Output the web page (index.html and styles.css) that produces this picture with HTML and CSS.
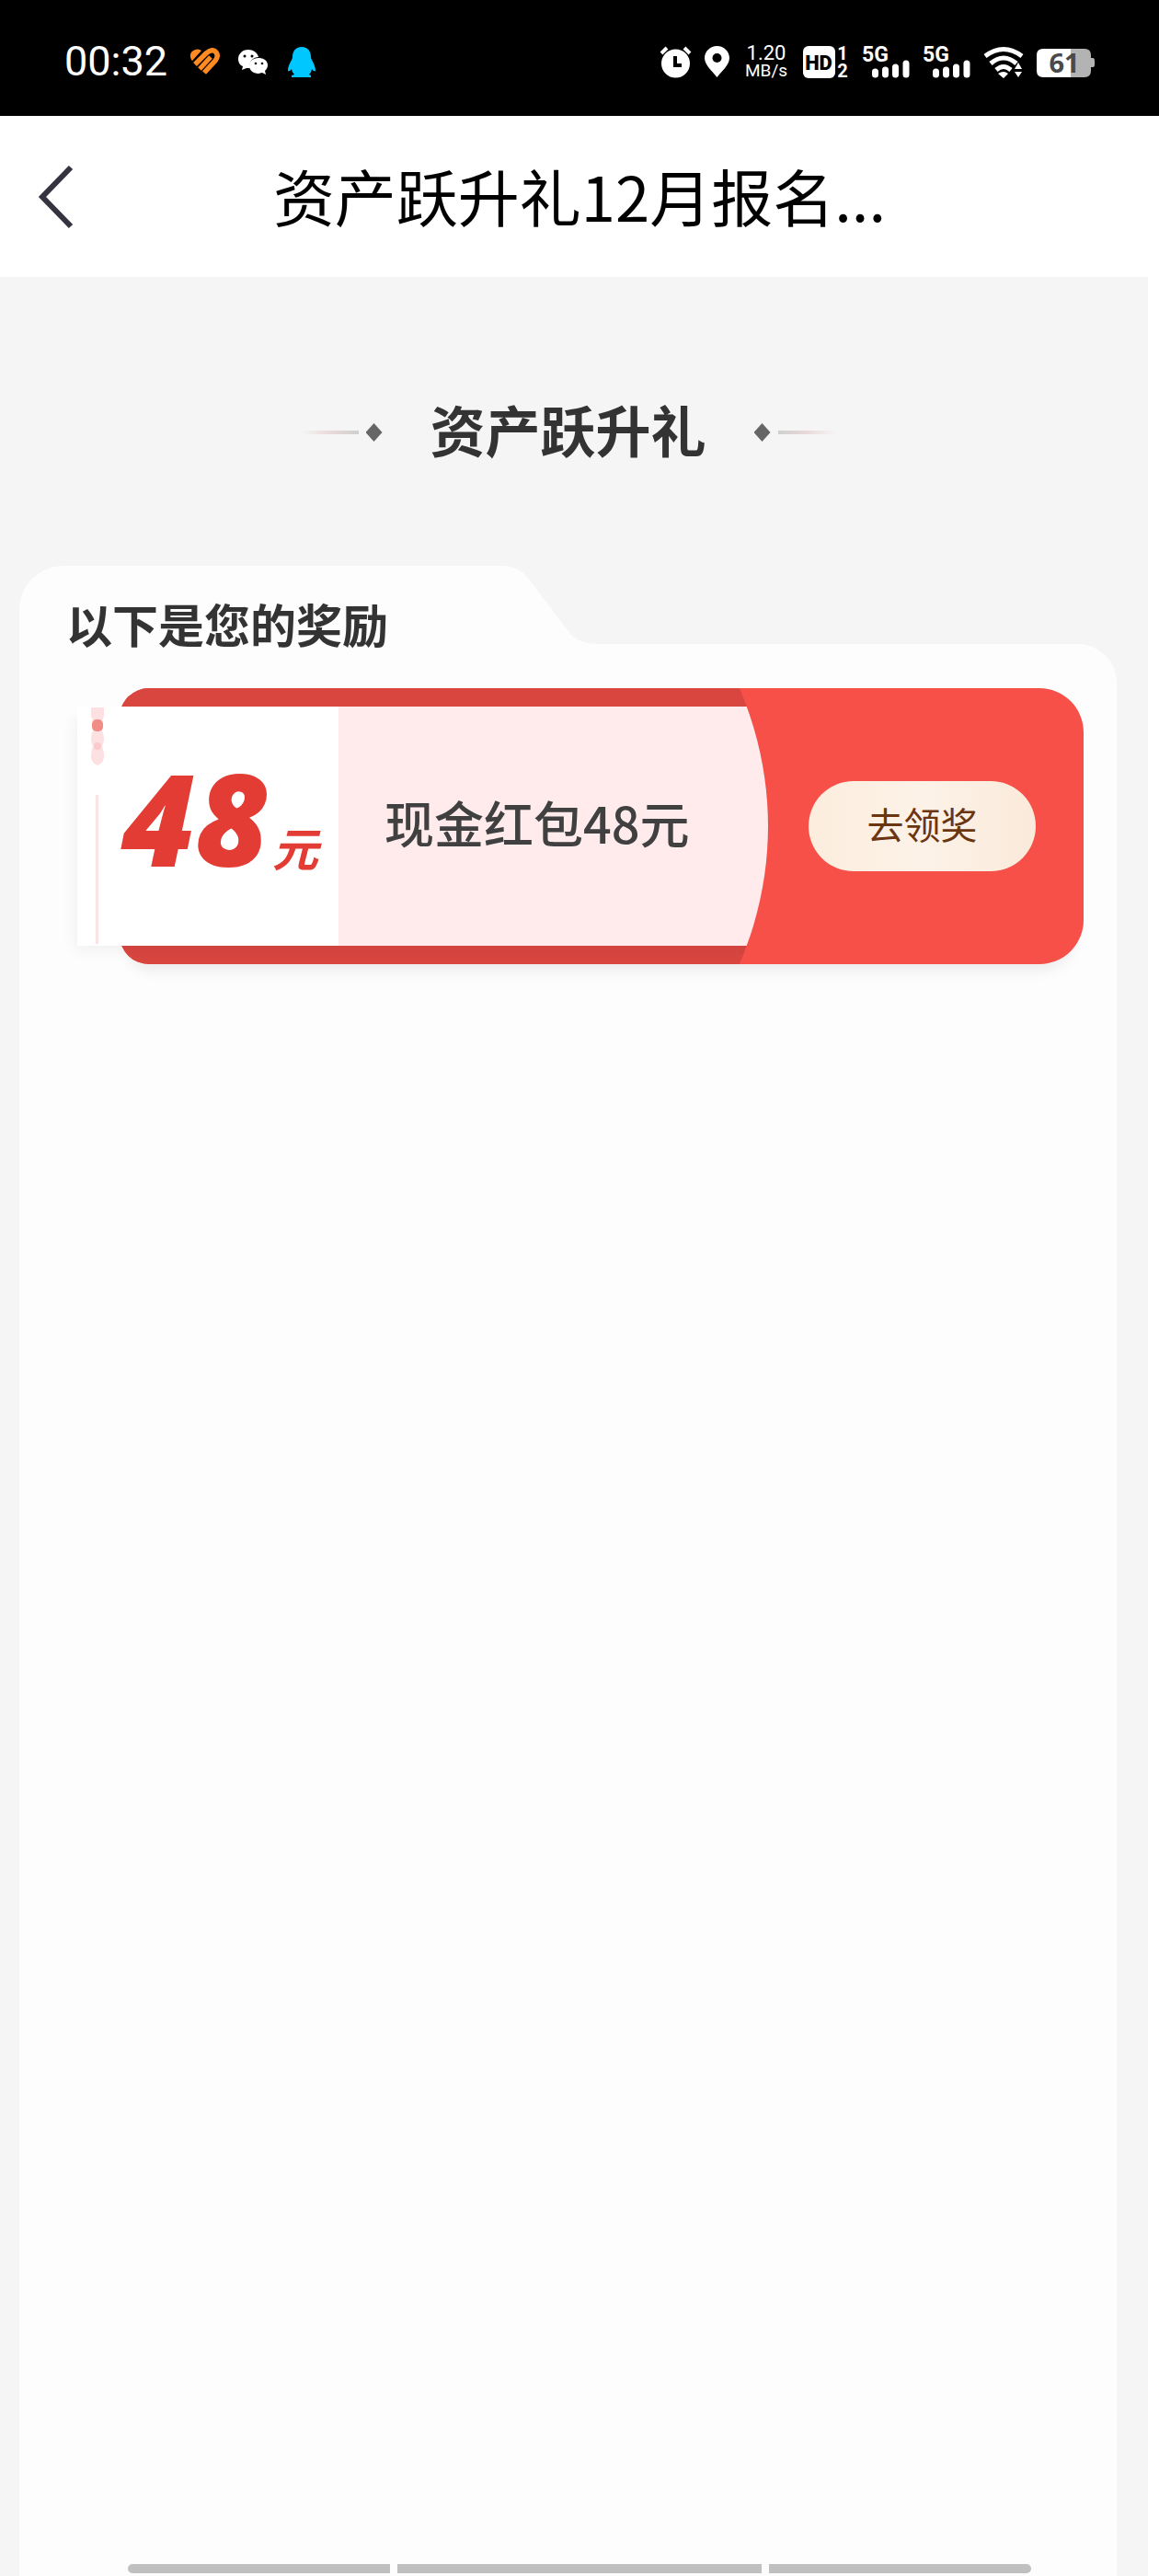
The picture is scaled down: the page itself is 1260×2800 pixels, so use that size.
FILE: index.html
```html
<!DOCTYPE html>
<html lang="zh-Hans">
<head>
  <meta charset="UTF-8">
  <meta name="viewport" content="width=device-width, initial-scale=1.0">
  <title>资产跃升礼</title>
  <link rel="stylesheet" href="styles.css">
</head>
<body>
  <div class="status-bar">
    <div class="status-left">
      <span class="time">00:32</span>
      <svg width="33" height="34" viewBox="0 0 33 34">
        <path d="M2 15 Q-1 8 4 5 Q9 2 13 5 L3 16 Z" fill="#ff8a1f"/>
        <path d="M6 20 L18 8 Q25 2 29 7 Q32 11 28 16 L16 29" fill="none" stroke="#ff8a1f" stroke-width="5.500"/>
        <path d="M11 25 L23 12" fill="none" stroke="#ff8a1f" stroke-width="5"/>
      </svg>
      <svg width="33" height="34" viewBox="0 0 33 34">
        <path d="M11 4 C4 4 0 9 0 14 C0 18 2 21 5 22 L4 26 L9 24 H13 C11 16 17 12 22 12 C21 7 16 4 11 4 Z" fill="#fff"/>
        <path d="M22 13 C16 13 12 17 12 21.500 C12 26 16 30 22 30 L26 29 L30 31 L29 27 C35 22 32 13 22 13 Z" fill="#fff"/>
        <circle cx="7" cy="11" r="1.500"/><circle cx="15" cy="11" r="1.500"/>
        <circle cx="19" cy="19" r="1.300"/><circle cx="26" cy="19" r="1.300"/>
      </svg>
      <svg width="32" height="34" viewBox="0 0 32 34">
        <path d="M16 1 C9 1 6 6 6 12 C6 15 1 20 1 27 Q3 28 5 25 Q5 28 8 31 L5 32 V34 H26 V32 L24 31 Q27 28 27 25 Q29 28 31 27 C31 20 26 15 26 12 C26 6 23 1 16 1 Z" fill="#00c8ff"/>
      </svg>
    </div>
    <div class="status-right">
      <svg width="35" height="36" viewBox="0 0 35 36">
        <circle cx="17.500" cy="20" r="15.500" fill="#fff"/>
        <path d="M2 9 L8 3 M27 3 L33 9" stroke="#fff" stroke-width="4"/>
        <path d="M17 12 V22 H24" fill="none" stroke="#000" stroke-width="4"/>
      </svg>
      <svg width="27" height="36" viewBox="0 0 27 36">
        <path d="M13.500 1 C6 1 0 7 0 14 C0 22 9 29 13.500 35 C18 29 27 22 27 14 C27 7 21 1 13.500 1 Z" fill="#fff"/>
        <circle cx="13.500" cy="14" r="5"/>
      </svg>
      <div class="speed"><span class="rate">1.20</span><span>MB/s</span></div>
      <svg width="50" height="36" viewBox="0 0 50 36">
        <rect y="1" width="35" height="35" rx="6" fill="#fff"/>
        <text x="17" y="27" class="hd-text">HD</text>
        <text x="43" y="16" class="sim-text">1</text>
        <text x="43" y="35" class="sim-text">2</text>
      </svg>
      <svg width="52" height="36" viewBox="0 0 52 36">
        <text x="0" y="18" class="net-text">5G</text>
        <path d="M14.500 29 V32 M25.500 27 V32 M36.500 24 V32 M48 20 V32" class="bars"/>
      </svg>
      <svg width="52" height="36" viewBox="0 0 52 36">
        <text x="0" y="18" class="net-text">5G</text>
        <path d="M14.500 29 V32 M25.500 27 V32 M36.500 24 V32 M48 20 V32" class="bars"/>
      </svg>
      <svg width="44" height="36" viewBox="0 0 44 36">
        <path d="M2 12 Q22 -3 42 12 M8 20 Q22 8 36 20 M14 27 Q22 20 30 27" fill="none" stroke="#fff" stroke-width="5"/>
        <path d="M16 31 Q22 27 27 31 L22 36 Z M34 26 L38 19 L42 26 Z M34 29 H42 L38 35 Z" fill="#fff"/>
      </svg>
      <svg width="63" height="36" viewBox="0 0 63 36">
        <path d="M37 4 H52 Q59 4 59 11 V14 H61 Q63 14 63 17 V22 Q63 24 61 24 H59 V28 Q59 35 52 35 H37 Z" fill="#b3b3b3"/>
        <path d="M37 4 H7 Q0 4 0 11 V28 Q0 35 7 35 H37 Z" fill="#fff"/>
        <text x="30" y="30" class="battery-text">61</text>
      </svg>
    </div>
  </div>

  <header>
    <button class="back-btn" aria-label="返回">
      <svg width="38" height="68" viewBox="0 0 38 68">
        <path d="M35 2 L4 34 L35 66" fill="none" stroke="#353340" stroke-width="6"/>
      </svg>
    </button>
    <h1>资产跃升礼12月报名...</h1>
  </header>

  <main>
    <div class="section-title">
      <span class="line"></span>
      <span class="diamond"></span>
      <h2>资产跃升礼</h2>
      <span class="diamond"></span>
      <span class="line line-right"></span>
    </div>

    <section class="card">
      <div class="card-tab">
        <h3>以下是您的奖励</h3>
        <svg width="120" height="85" viewBox="0 0 120 85">
          <path d="M0 0 H10 Q31 0 42 17 L82 70 Q92 85 115 85 H0 Z" fill="#fdfdfd"/>
        </svg>
      </div>
      <div class="card-body">
        <div class="coupon">
          <div class="coupon-left">
            <div class="ticket">
              <div class="amount">
                <svg class="ticket-deco" width="16" height="260" viewBox="0 0 16 260">
                  <path d="M1 1 H15 V10 Q13 14 13 20 V26 Q17 36 13 43 Q19 60 8 64 Q-3 60 3 43 Q-1 36 3 26 V20 Q3 14 1 10 Z" fill="#fde0e1"/>
                  <rect x="2" y="14" width="12" height="13" rx="5" fill="#f08d87"/>
                  <circle cx="8" cy="43" r="4" fill="#fbcaca"/>
                  <rect x="6" y="96" width="3" height="162" fill="#fde2e4"/>
                </svg>
                <span class="number">48</span><span class="unit">元</span>
              </div>
              <div class="prize">现金红包48元</div>
            </div>
          </div>
          <div class="coupon-right">
            <button class="claim-btn">去领奖</button>
          </div>
        </div>
      </div>
    </section>
  </main>

  <div class="nav-hint">
    <span></span>
    <span class="middle"></span>
    <span></span>
  </div>
</body>
</html>
```
FILE: styles.css
```css
* {
  margin: 0;
  padding: 0;
  box-sizing: border-box;
}

body {
  min-height: 100vh;
  display: flex;
  flex-direction: column;
  background-color: #fff;
  color: #333;
  font-family: "Noto Sans CJK SC", sans-serif;
}

svg {
  display: block;
  flex-shrink: 0;
  overflow: visible;
}

.status-bar {
  height: 126px;
  padding: 8px 70px 0;
  display: flex;
  justify-content: space-between;
  align-items: center;
  background-color: #000;
  color: #fff;
  font-family: Roboto, sans-serif;
}

.status-left {
  display: flex;
  align-items: center;
  gap: 20px;
}

.status-right {
  display: flex;
  align-items: center;
  gap: 14px;
}

.time {
  margin-right: 4px;
  font-size: 45px;
  line-height: 48px;
}

.speed {
  width: 52px;
  display: flex;
  flex-direction: column;
  align-items: center;
  font-size: 19px;
  line-height: 19px;
}

.rate {
  font-size: 22px;
}

.hd-text {
  font: 900 22px Roboto, sans-serif;
  text-anchor: middle;
}

.sim-text {
  font: 700 20px Roboto, sans-serif;
  text-anchor: middle;
  fill: #fff;
}

.net-text {
  font: 700 23px Roboto, sans-serif;
  fill: #fff;
}

.bars {
  stroke: #fff;
  stroke-width: 7;
  stroke-linecap: round;
}

.battery-text {
  font: 700 29px "Open Sans", sans-serif;
  text-anchor: middle;
  fill: #4a4a4a;
}

header {
  height: 175px;
  padding: 0 42px;
  display: grid;
  grid-template-columns: 1fr auto 1fr;
  align-items: center;
  background-color: #fff;
}

.back-btn {
  justify-self: start;
  border: none;
  background: none;
  cursor: pointer;
}

h1 {
  padding-bottom: 4px;
  color: #000;
  font-size: 67px;
  line-height: 96px;
  font-weight: 400;
}

main {
  flex: 1;
  display: flex;
  flex-direction: column;
  margin-right: 12px;
  padding: 0 34px 0 21px;
  background-color: #f5f5f5;
}

.section-title {
  padding: 125px 0 101px;
  display: flex;
  justify-content: center;
  align-items: center;
}

h2 {
  margin: 0 52px;
  padding-bottom: 8px;
  font-size: 60px;
  line-height: 80px;
}

.line {
  width: 62px;
  height: 4px;
  margin: 0 8px;
  background: linear-gradient(to right, #f5f5f5, #ead9d9, #cfcfcf);
}

.line-right {
  background: linear-gradient(to left, #f5f5f5, #ead9d9, #cfcfcf);
}

.diamond {
  width: 18px;
  height: 20px;
  background-color: #666;
  clip-path: polygon(50% 0, 100% 50%, 50% 100%, 0 50%);
}

.card {
  flex: 1;
  display: flex;
  flex-direction: column;
}

/* the heading hangs a little below the tab, keep it over the card body */
.card-tab {
  position: relative;
  z-index: 1;
  display: flex;
}

h3 {
  width: 514px;
  height: 85px;
  padding: 42px 0 0 51px;
  border-top-left-radius: 48px;
  background-color: #fdfdfd;
  font-size: 50px;
  line-height: 40px;
}

.card-body {
  flex: 1;
  padding: 48px 36px 48px 109px;
  border-top-right-radius: 42px;
  background-color: #fdfdfd;
}

.coupon {
  display: flex;
  border-radius: 32px 48px 48px 32px;
  background-color: #f75049;
  box-shadow: 0 16px 16px -10px rgba(0, 0, 0, 0.08);
}

.coupon-left {
  flex: 1;
  padding: 20px 0;
  border-radius: 32px 0 0 32px;
  background-color: #d94640;
  clip-path: ellipse(800px 544px at calc(100% - 800px) 50%);
}

.ticket {
  height: 260px;
  margin-left: -46px;
  display: flex;
  background-color: #ffebec;
  box-shadow: -6px 8px 16px -4px rgba(0, 0, 0, 0.06);
}

.amount {
  width: 284px;
  padding-left: 14px;
  display: flex;
  align-items: baseline;
  background-color: #fff;
  color: #e23c34;
  font-style: italic;
  line-height: 240px;
}

.ticket-deco {
  align-self: flex-start;
  margin-right: 18px;
}

.number {
  font-family: "Open Sans", sans-serif;
  font-size: 138px;
  font-weight: 800;
}

.unit {
  margin-left: 4px;
  font-size: 50px;
  font-weight: 700;
}

.prize {
  padding-left: 50px;
  color: #404040;
  font-size: 54px;
  font-weight: 500;
  line-height: 252px;
}

.coupon-right {
  width: 343px;
  padding-right: 52px;
  display: flex;
  justify-content: flex-end;
  align-items: center;
}

.claim-btn {
  width: 247px;
  height: 98px;
  padding-bottom: 6px;
  border: none;
  border-radius: 49px;
  background: linear-gradient(to right, #fceddd, #fdf2e8 50%, #faeada);
  color: #6b3510;
  font-family: inherit;
  font-size: 40px;
  cursor: pointer;
}

/* gesture hint, lies over the page */
.nav-hint {
  position: fixed;
  left: 11%;
  right: 11%;
  bottom: 3px;
  height: 10px;
  display: flex;
  gap: 8px;
  border-radius: 5px;
  overflow: hidden;
}

.nav-hint span {
  flex: 285;
  background-color: #c0c0c0;
}

.nav-hint .middle {
  flex: 395;
}
```
